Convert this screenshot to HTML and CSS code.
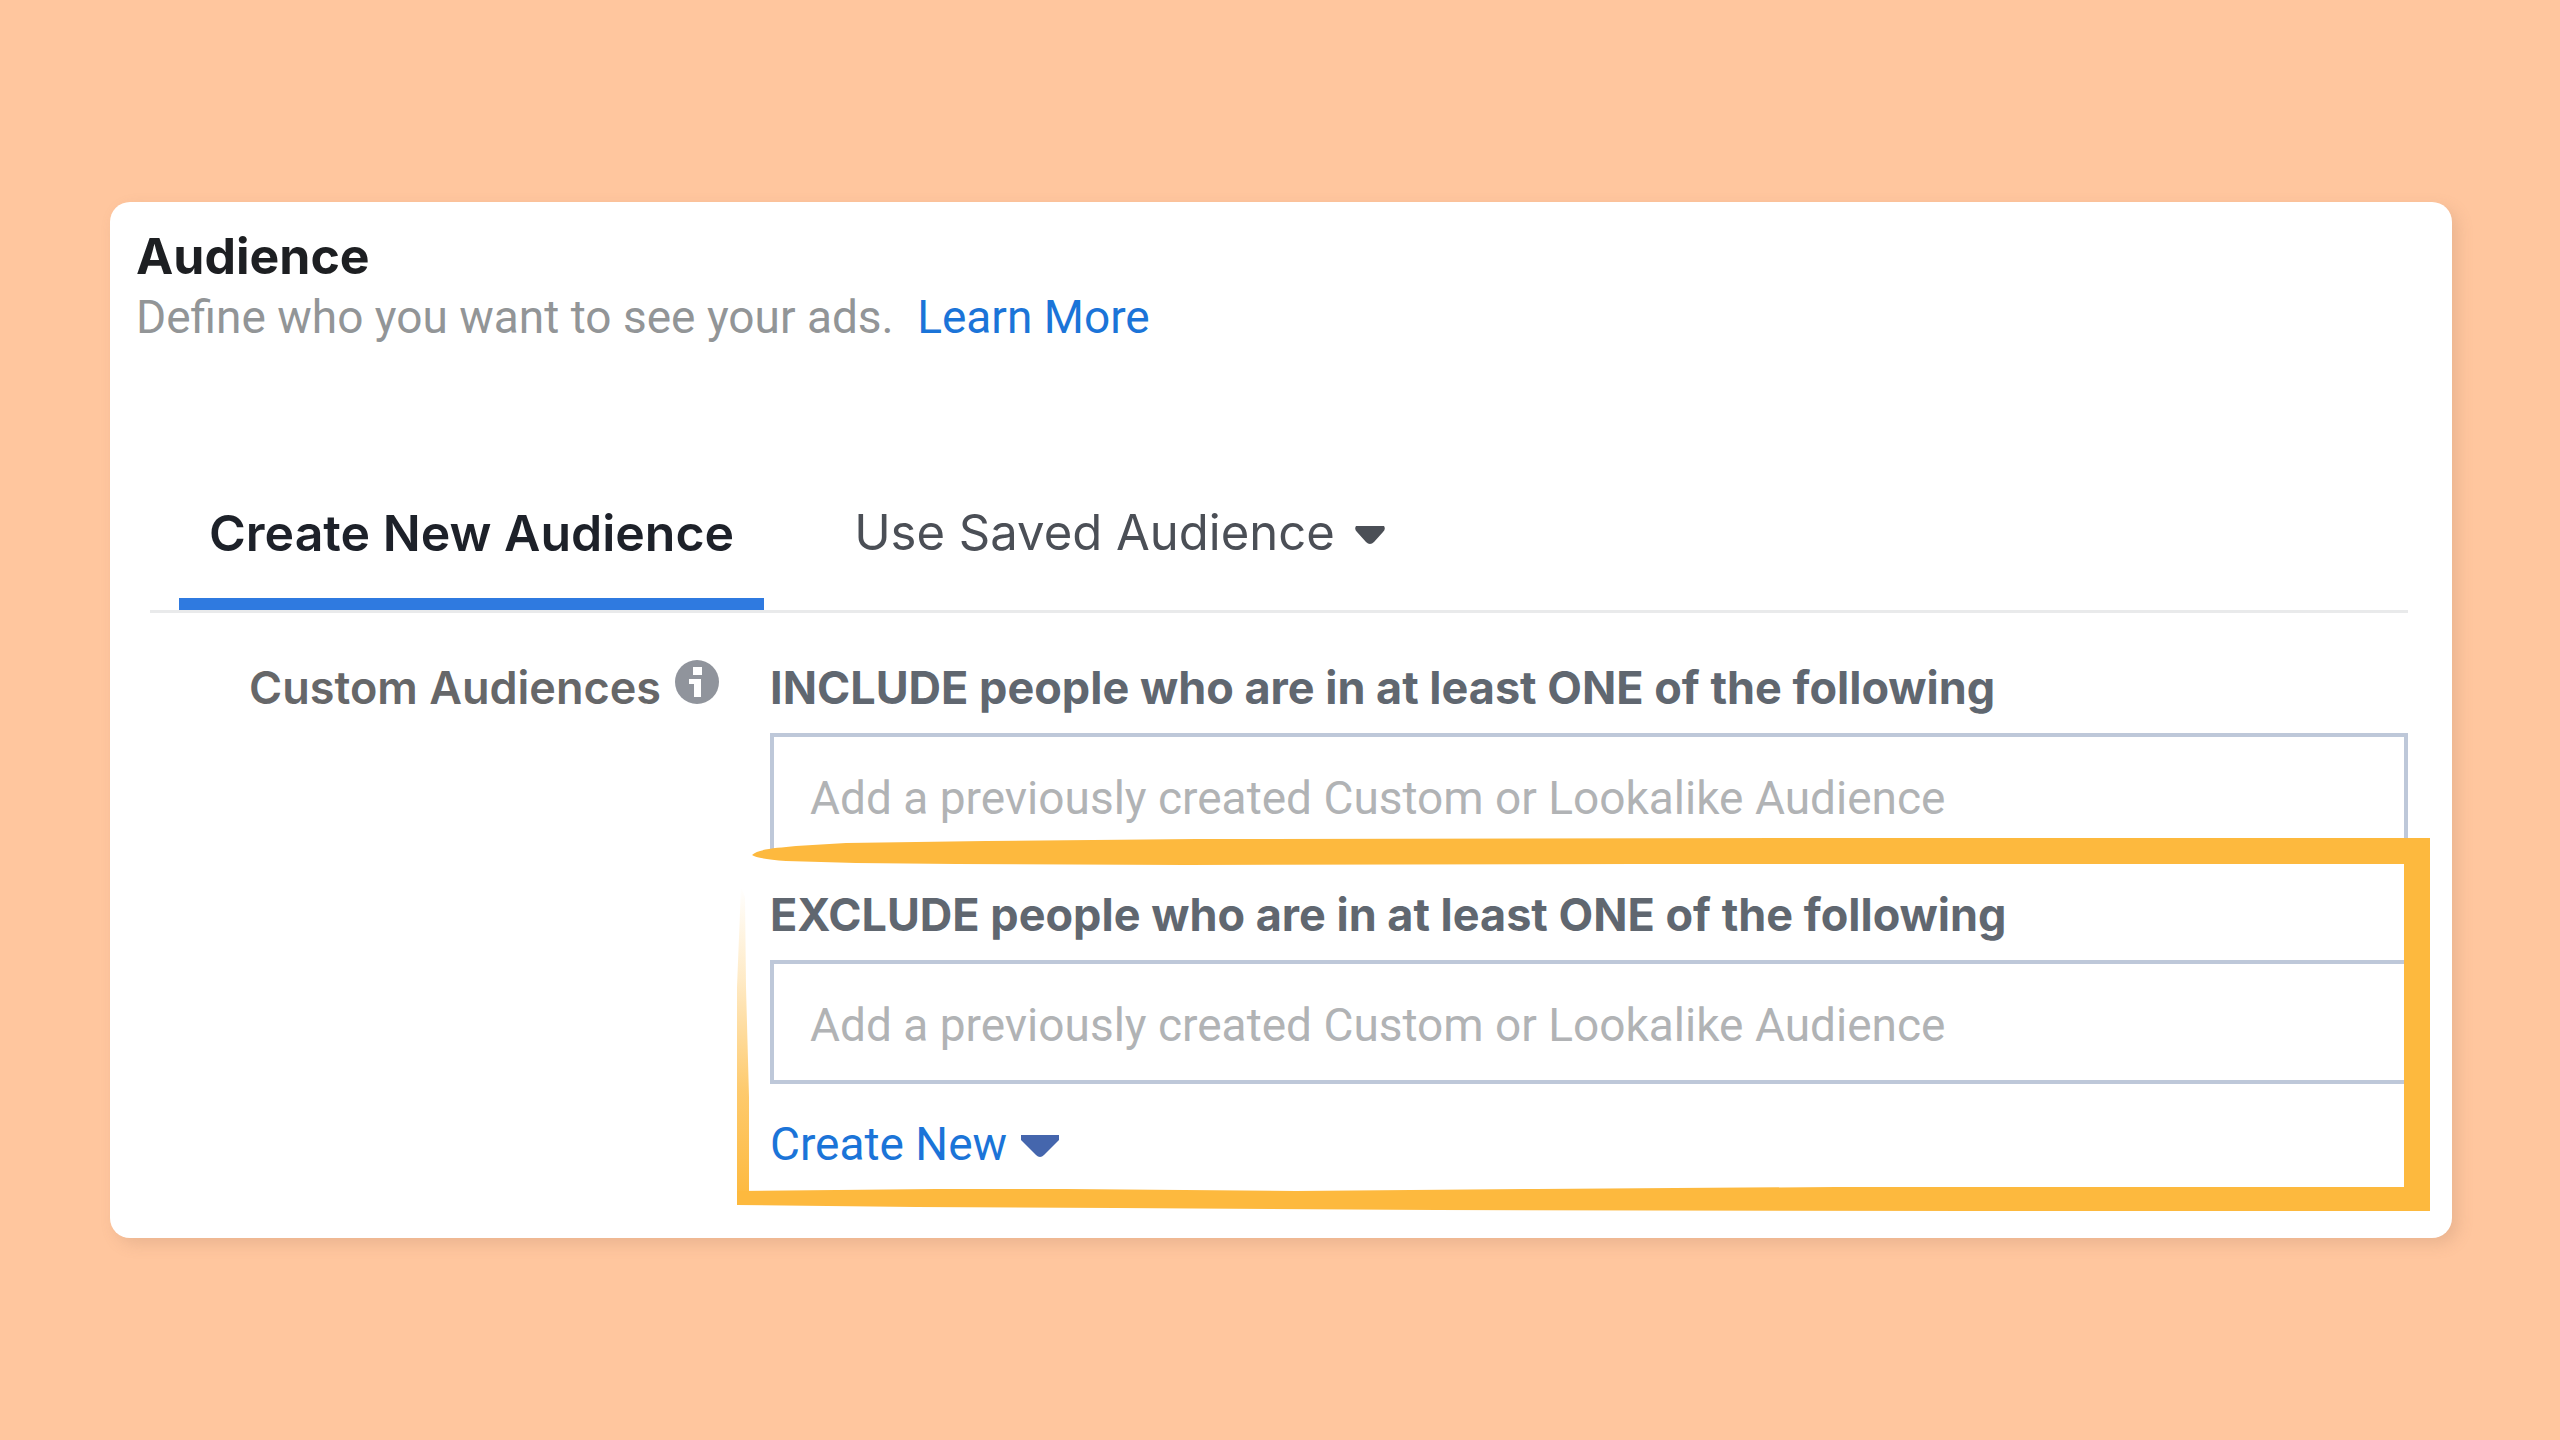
FILE: index.html
```
<!DOCTYPE html>
<html lang="en">
<head>
<meta charset="utf-8">
<title>Audience</title>
<link rel="stylesheet" href="styles.css">
</head>
<body>
<main class="card">
  <header class="header">
    <h1 class="title">Audience</h1>
    <p class="subtitle">Define who you want to see your ads. <a class="link" href="#">Learn More</a></p>
  </header>

  <section class="panel">
    <div class="tabs" role="tablist">
      <button class="tab tab-active" type="button" role="tab" aria-selected="true">Create New Audience</button>
      <button class="tab" type="button" role="tab" aria-selected="false">Use Saved Audience
        <svg class="caret tab-caret" viewBox="0 0 30 18" aria-hidden="true"><path d="M1 0H29Q31 3 28 6L19 16Q15 20 11 16L2 6Q-1 3 1 0Z"/></svg>
      </button>
    </div>

    <div class="row">
      <div class="row-label">
        <span>Custom Audiences</span>
        <svg class="info" viewBox="0 0 44 44" aria-hidden="true">
          <circle cx="22" cy="22" r="22" fill="#90949c"/>
          <path d="M18 7h9v8h-9zM14 19h12v18h-7V24h-5z" fill="#fff"/>
        </svg>
      </div>

      <div class="fields">
        <div class="field">
          <label class="field-label" for="include">INCLUDE people who are in at least ONE of the following</label>
          <input class="box" id="include" type="text" placeholder="Add a previously created Custom or Lookalike Audience">
        </div>
        <div class="field exclude">
          <label class="field-label" for="exclude">EXCLUDE people who are in at least ONE of the following</label>
          <input class="box" id="exclude" type="text" placeholder="Add a previously created Custom or Lookalike Audience">
          <button class="create" type="button">Create New
            <svg class="caret create-caret" viewBox="0 0 38 22" aria-hidden="true"><path d="M0 0H38V5L23 20Q19 24 15 20L0 5Z"/></svg>
          </button>
          <svg class="marker" viewBox="0 0 1694 376" preserveAspectRatio="none" aria-hidden="true">
            <defs>
              <linearGradient id="fade" x1="0" y1="0" x2="0" y2="1">
                <stop offset="0" stop-color="#fdb93e" stop-opacity="0"/>
                <stop offset=".3" stop-color="#fdb93e" stop-opacity=".3"/>
                <stop offset=".65" stop-color="#fdb93e" stop-opacity=".75"/>
                <stop offset="1" stop-color="#fdb93e"/>
              </linearGradient>
            </defs>
            <path d="M16 18C22 12 40 11 60 9L110 6L250 4L460 2L1100 1L1694 1V374H1240L700 373L380 371L180 370L1 368V354L200 352L330 352L560 354L800 352L1100 350H1668V27H900L450 28L220 27L120 26L50 24Q22 22 16 18Z" fill="#fdb93e"/>
            <path d="M5 50L9 60L10 150L13 260V362H1V150Z" fill="url(#fade)"/>
          </svg>
        </div>
      </div>
    </div>
  </section>
</main>
</body>
</html>
```
FILE: styles.css
```
* {
  box-sizing: border-box;
}

body {
  margin: 0;
  min-height: 100vh;
  padding: 40px 108px 40px 110px;
  display: flex;
  align-items: center;
  background: #ffc69e;
  font-family: Roboto, "Liberation Sans", sans-serif;
  font-size: 46px;
  line-height: 56px;
}

button {
  margin: 0;
  padding: 0;
  border: 0;
  background: none;
  font: inherit;
  cursor: pointer;
}

.card {
  flex: 1;
  padding: 24px 44px 66px 26px;
  border-radius: 20px;
  background: #fff;
  box-shadow: 6px 6px 16px rgba(150, 110, 90, 0.2);
}

.header {
  display: grid;
  gap: 3px;
}

.title {
  margin: 0;
  font: 700 50px/60px Inter, "Liberation Sans", sans-serif;
  color: #1d1f22;
}

.subtitle {
  margin: 0;
  color: #929597;
}

.link {
  margin-left: 12px;
  color: #1b74d8;
  text-decoration: none;
}

.panel {
  margin: 158px 0 0 14px;
}

.tabs {
  display: flex;
  gap: 60px;
  padding-left: 29px;
  border-bottom: 3px solid #e9eaeb;
}

.tab {
  display: flex;
  align-items: center;
  gap: 20px;
  padding: 0 30px 35px;
  border-bottom: 12px solid transparent;
  font: 400 49px/60px Inter, "Liberation Sans", sans-serif;
  color: #4b4f56;
}

.tab-active {
  border-bottom-color: #2f7ae0;
  font-size: 50px;
  font-weight: 600;
  color: #1d2129;
}

.caret {
  margin-top: 4px;
}

.tab-caret {
  width: 30px;
  height: 18px;
  fill: #4b4f56;
}

.row {
  display: grid;
  grid-template-columns: 569px 1fr;
  gap: 51px;
  margin-top: 47px;
}

.row-label {
  display: flex;
  justify-content: flex-end;
  align-items: flex-start;
  gap: 14px;
  font: 600 45px/56px Inter, "Liberation Sans", sans-serif;
  color: #666769;
}

.info {
  width: 44px;
  height: 44px;
}

.fields {
  display: grid;
  gap: 30px;
}

.field {
  display: grid;
  justify-items: start;
}

.exclude {
  position: relative;
}

.field-label {
  margin-bottom: 17px;
  font: 700 45px/56px Inter, "Liberation Sans", sans-serif;
  color: #606770;
}

.box {
  width: 100%;
  height: 124px;
  padding: 6px 36px 0;
  border: 4px solid #bec8d9;
  border-radius: 0;
  background: #fff;
  font: inherit;
  color: #1d2129;
}

.box::placeholder {
  color: #b1b3b5;
  opacity: 1;
}

.create {
  display: flex;
  align-items: center;
  gap: 14px;
  margin-top: 32px;
  color: #1b74d8;
}

.create-caret {
  width: 38px;
  height: 22px;
  fill: #4566ad;
}

/* Hand-drawn frame round the exclude group */
.marker {
  position: absolute;
  left: -34px;
  top: -50px;
  width: calc(100% + 56px);
  height: calc(100% + 91px);
  pointer-events: none;
}
```
